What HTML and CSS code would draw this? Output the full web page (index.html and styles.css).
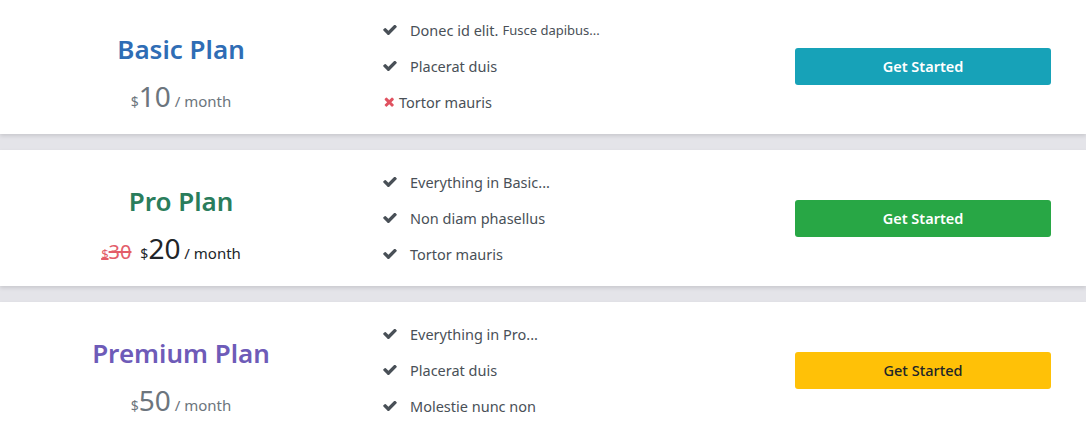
FILE: index.html
```html
<!DOCTYPE html>
<html>
<head>
    <title>Pricing Plans</title>
    <meta charset="utf-8">
    <link rel="stylesheet" href="styles.css">
</head>
<body>
    <div class="plans">

        <!-- BASIC -->
        <div class="plan">
            <div class="plan-info">
                <h2 class="plan-name basic">Basic Plan</h2>
                <div class="price"><span class="cur">$</span><span class="amount">10</span> <span class="per">/ month</span></div>
            </div>
            <ul class="features">
                <li><svg class="icon check" viewBox="100 420 1590 1030"><path d="M1671 566q0 40-28 68l-724 724-136 136q-28 28-68 28t-68-28l-136-136-362-362q-28-28-28-68t28-68l136-136q28-28 68-28t68 28l294 295 656-657q28-28 68-28t68 28l136 136q28 28 28 68z"/></svg>Donec id elit. <small>Fusce dapibus...</small></li>
                <li><svg class="icon check" viewBox="100 420 1590 1030"><path d="M1671 566q0 40-28 68l-724 724-136 136q-28 28-68 28t-68-28l-136-136-362-362q-28-28-28-68t28-68l136-136q28-28 68-28t68 28l294 295 656-657q28-28 68-28t68 28l136 136q28 28 28 68z"/></svg>Placerat duis</li>
                <li class="missing"><svg class="icon times" viewBox="90 330 1420 1220"><path d="M1490 1322q0 40-28 68l-136 136q-28 28-68 28t-68-28l-294-294-294 294q-28 28-68 28t-68-28l-136-136q-28-28-28-68t28-68l294-294-294-294q-28-28-28-68t28-68l136-136q28-28 68-28t68 28l294 294 294-294q28-28 68-28t68 28l136 136q28 28 28 68t-28 68l-294 294 294 294q28 28 28 68z"/></svg>Tortor mauris</li>
            </ul>
            <div class="plan-action">
                <a class="btn btn-info" href="#">Get Started</a>
            </div>
        </div>

        <!-- PRO -->
        <div class="plan">
            <div class="plan-info">
                <h2 class="plan-name pro">Pro Plan</h2>
                <div class="price dark"><span class="old"><span class="cur">$</span>30</span> <span class="cur">$</span><span class="amount">20</span> <span class="per">/ month</span></div>
            </div>
            <ul class="features">
                <li><svg class="icon check" viewBox="100 420 1590 1030"><path d="M1671 566q0 40-28 68l-724 724-136 136q-28 28-68 28t-68-28l-136-136-362-362q-28-28-28-68t28-68l136-136q28-28 68-28t68 28l294 295 656-657q28-28 68-28t68 28l136 136q28 28 28 68z"/></svg>Everything in Basic...</li>
                <li><svg class="icon check" viewBox="100 420 1590 1030"><path d="M1671 566q0 40-28 68l-724 724-136 136q-28 28-68 28t-68-28l-136-136-362-362q-28-28-28-68t28-68l136-136q28-28 68-28t68 28l294 295 656-657q28-28 68-28t68 28l136 136q28 28 28 68z"/></svg>Non diam phasellus</li>
                <li><svg class="icon check" viewBox="100 420 1590 1030"><path d="M1671 566q0 40-28 68l-724 724-136 136q-28 28-68 28t-68-28l-136-136-362-362q-28-28-28-68t28-68l136-136q28-28 68-28t68 28l294 295 656-657q28-28 68-28t68 28l136 136q28 28 28 68z"/></svg>Tortor mauris</li>
            </ul>
            <div class="plan-action">
                <a class="btn btn-success" href="#">Get Started</a>
            </div>
        </div>

        <!-- PREMIUM -->
        <div class="plan">
            <div class="plan-info">
                <h2 class="plan-name premium">Premium Plan</h2>
                <div class="price"><span class="cur">$</span><span class="amount">50</span> <span class="per">/ month</span></div>
            </div>
            <ul class="features">
                <li><svg class="icon check" viewBox="100 420 1590 1030"><path d="M1671 566q0 40-28 68l-724 724-136 136q-28 28-68 28t-68-28l-136-136-362-362q-28-28-28-68t28-68l136-136q28-28 68-28t68 28l294 295 656-657q28-28 68-28t68 28l136 136q28 28 28 68z"/></svg>Everything in Pro...</li>
                <li><svg class="icon check" viewBox="100 420 1590 1030"><path d="M1671 566q0 40-28 68l-724 724-136 136q-28 28-68 28t-68-28l-136-136-362-362q-28-28-28-68t28-68l136-136q28-28 68-28t68 28l294 295 656-657q28-28 68-28t68 28l136 136q28 28 28 68z"/></svg>Placerat duis</li>
                <li><svg class="icon check" viewBox="100 420 1590 1030"><path d="M1671 566q0 40-28 68l-724 724-136 136q-28 28-68 28t-68-28l-136-136-362-362q-28-28-28-68t28-68l136-136q28-28 68-28t68 28l294 295 656-657q28-28 68-28t68 28l136 136q28 28 28 68z"/></svg>Molestie nunc non</li>
            </ul>
            <div class="plan-action">
                <a class="btn btn-warning" href="#">Get Started</a>
            </div>
        </div>

    </div>
</body>
</html>
```

FILE: styles.css
```css
body {
    margin: 0;
    font-family: "Noto Sans", "Open Sans", sans-serif;
    background-color: #e4e4e9;
    color: #495057;
}

.plans {
    margin-top: -2px;
}

/* One white card per plan */
.plan {
    display: grid;
    grid-template-columns: 362px 362px 1fr;
    align-items: center;
    height: 136px;
    background: #ffffff;
    margin-bottom: 16px;
    box-shadow: 0 2px 4px rgba(0, 0, 0, 0.12);
}

.plan-info {
    text-align: center;
    padding-top: 19px;
}

.plan-name {
    margin: 0 0 13px 0;
    font-size: 26px;
    font-weight: 600;
    line-height: 34px;
}

.plan-name.basic {
    color: #2f6db5;
}

.plan-name.pro {
    color: #2a7d5c;
}

.plan-name.premium {
    color: #6e5bb8;
}

.price {
    color: #6c757d;
    font-size: 15px;
    line-height: 34px;
}

.price .cur {
    font-size: 14px;
}

.price .amount {
    font-size: 28px;
}

.price.dark {
    color: #212529;
    padding-right: 20px;
}

.price .old {
    color: #e35d6a;
    font-size: 20px;
    text-decoration: line-through;
    margin-right: 5px;
}

.price .old .cur {
    font-size: 13px;
}

/* Feature list */
.features {
    list-style: none;
    margin: 0;
    padding: 0 0 0 21px;
}

.features li {
    display: flex;
    align-items: center;
    height: 36px;
    font-size: 14.5px;
    color: #495057;
}

.features small {
    font-size: 13px;
    margin-left: 4px;
}

.icon {
    fill: #495057;
}

.icon.check {
    width: 14px;
    height: 10px;
    margin-right: 13px;
}

.icon.times {
    fill: #e05260;
    width: 11px;
    height: 10px;
    margin-right: 5px;
}

/* Button column */
.plan-action {
    padding: 0 35px 0 71px;
}

.btn {
    display: block;
    height: 37px;
    line-height: 37px;
    border-radius: 3px;
    text-align: center;
    text-decoration: none;
    font-size: 14.5px;
    font-weight: 600;
    color: #ffffff;
}

.btn-info {
    background: #17a2b8;
}

.btn-success {
    background: #28a745;
}

.btn-warning {
    background: #ffc107;
    color: #212529;
    font-weight: 500;
}
```
